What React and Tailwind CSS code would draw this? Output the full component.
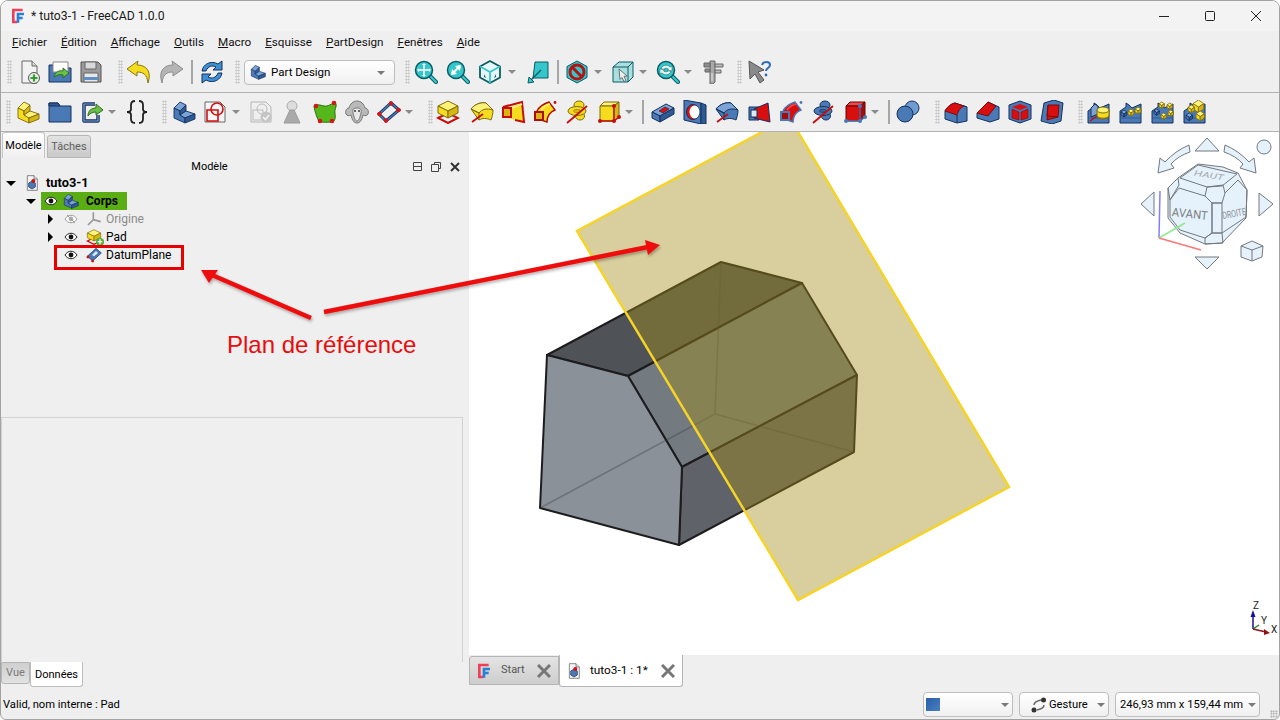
const Y = { top: "#fff27a", a: "#f6dc1e", b: "#d6b612", line: "#7d6a0c" };
const B = { top: "#7ba3d6", a: "#4a7ab5", b: "#2f5a94", line: "#15315e" };
const R = { top: "#f04a4a", a: "#d90f0f", b: "#a80a0a", line: "#6a0505" };
const T = { a: "#35c6cc", b: "#1a9aa2", line: "#0b5c62" };

const I = ({ children, className = "size-6" }) => (
  <svg viewBox="0 0 24 24" className={className}>
    {children}
  </svg>
);

// stepped block, used for part and body
const Step = ({ c, className }) => (
  <I className={className}>
    <g stroke={c.line} strokeWidth="0.9" strokeLinejoin="round">
      <path d="M2 8 8 2l6 3-6 6z" fill={c.top} />
      <path d="M2 8l6 3v4l5 3v5L2 18z" fill={c.a} />
      <path d="M8 11l6-6v6l-6 4z" fill={c.b} />
      <path d="M8 15l6-4 9 3-10 4z" fill={c.top} />
      <path d="M13 18l10-4v5l-10 4z" fill={c.b} />
    </g>
  </I>
);

const Pad = ({ className }) => (
  <I className={className}>
    <path d="M2 18l10-5 10 5-10 5z" fill="none" stroke="#c40c0c" strokeWidth="2" />
    <g stroke={Y.line} strokeLinejoin="round">
      <path d="M2 6l10-5 10 5-10 5z" fill={Y.top} />
      <path d="M2 6l10 5v7L2 13z" fill={Y.a} />
      <path d="M12 11l10-5v7l-10 5z" fill={Y.b} />
    </g>
  </I>
);

const Revolve = ({ c, line = "#c40c0c" }) => (
  <I>
    <g stroke={c.line} strokeLinejoin="round">
      <path d="M1 9C5 4 11 2 16 3l7 7c0 4-1 7-2 10-4-2-9-2-12 0z" fill={c.a} />
      <path d="M1 9C5 4 11 2 16 3l7 7C17 8 12 9 9 13z" fill={c.top} />
      <path d="M1 9l8 4v7" fill="none" />
    </g>
    <path d="M2 22 13 14" stroke={line} strokeWidth="1.800" />
  </I>
);

const Loft = ({ c, frame }) => (
  <I>
    <path d="M7 8 21 3l2 19-16-4z" fill={c.a} />
    <path d="M2 7 21 2l2 20-9-2" fill="none" stroke={frame} strokeWidth="2" />
    <path d="M9 9l12-5" stroke={c.top} strokeWidth="1.500" />
    <rect x="2" y="8" width="8" height="9" fill={c.b} stroke={frame} strokeWidth="2" />
  </I>
);

const Sweep = ({ c, frame, dot = "#c40c0c" }) => (
  <I>
    <path d="M4 11C6 7 10 4 16 2l6 8c-5 2-8 6-8 12l-9-3z" fill={c.a} stroke={frame} strokeWidth="1.400" />
    <path d="M8 10c2-3 5-5 9-6" stroke={c.top} strokeWidth="1.500" fill="none" />
    <rect x="2" y="12" width="8" height="8" fill={c.b} stroke={frame} strokeWidth="2" />
    <circle cx="22" cy="2.500" r="1.400" fill={dot} />
  </I>
);

const Helix = ({ c, line = "#c40c0c" }) => (
  <I>
    <g fill={c.a} stroke={c.line}>
      <ellipse cx="14" cy="5" rx="5" ry="4" />
      <ellipse cx="15" cy="16" rx="4.500" ry="4" />
      <ellipse cx="12" cy="11" rx="9" ry="4.500" />
    </g>
    <ellipse cx="12" cy="11" rx="3.500" ry="1.700" fill={c.b} stroke={c.line} strokeWidth=".5" />
    <path d="M2 23 22 6" stroke={line} strokeWidth="1.800" />
  </I>
);

const Prim = ({ c, dot }) => (
  <I>
    <g stroke={c.line} strokeLinejoin="round">
      <path d="M3 6l4-4h15l-5 4z" fill={c.top} />
      <path d="M3 6h14v15H3z" fill={c.a} />
      <path d="M17 6l5-4v15l-5 4z" fill={c.b} />
    </g>
    <path d="M17 6v15M3 21h14l5-4" stroke={dot} strokeWidth="1.300" fill="none" />
    <g fill={dot}>
      <circle cx="3" cy="21" r="2" />
      <circle cx="17" cy="21" r="2" />
      <circle cx="17" cy="6" r="2" />
      <circle cx="22" cy="17" r="2" />
    </g>
  </I>
);

const Mag = ({ children }) => (
  <I>
    <path d="M15.500 15.500 22 22" stroke={T.line} strokeWidth="4" strokeLinecap="round" />
    <path d="M15.500 15.500 22 22" stroke={T.a} strokeWidth="2.200" strokeLinecap="round" />
    <circle cx="10" cy="10" r="8.500" fill={T.a} stroke={T.line} strokeWidth="1.500" />
    {children}
  </I>
);

const Pattern = ({ children }) => (
  <I>
    <path d="M1 23V11l6-4V3l3 2 3 3 9-4v19z" fill={B.a} stroke={B.line} strokeLinejoin="round" />
    <path d="M1 18h21" stroke={B.b} />
    {children}
  </I>
);

const Cubie = ({ x, y, s = 1, c = Y }) => (
  <g transform={`translate(${x} ${y}) scale(${s})`} stroke={c.line} strokeWidth={0.8 / s} strokeLinejoin="round">
    <path d="M0 2l3-2 3 2-3 2z" fill={c.top} />
    <path d="M0 2l3 2v3L0 5z" fill={c.a} />
    <path d="M6 2 3 4v3l3-2z" fill={c.b} />
  </g>
);

const FcLogo = ({ className = "size-[16px]" }) => (
  <I className={className}>
    <path d="M19 3H5v18h6" fill="none" stroke="#ef4058" strokeWidth="4" />
    <path d="M10 7h11v4h-7v2h5v4h-5v5h-4z" fill="#2a7fd6" />
  </I>
);

const DocIcon = () => (
  <I className="size-[16px]">
    <path d="M5 1h10l5 5v17H5z" fill="#f4f4f4" stroke="#555" />
    <path d="M15 1v5h5" fill="#ddd" stroke="#555" />
    <path d="M7 12l5-3 5 3v6l-5 3-5-3z" fill={B.a} stroke={B.line} />
    <circle cx="14" cy="9" r="3" fill="#d40f0f" />
  </I>
);

const Eye = ({ off }) => (
  <svg viewBox="0 0 14 10" className="w-[14px] h-[10px]">
    <path d="M1 5c3-5 9-5 12 0-3 5-9 5-12 0z" fill="#fff" stroke={off ? "#9a9a9a" : "#222"} strokeWidth="1" />
    <circle cx="7" cy="5" r="2.400" fill={off ? "#b0b0b0" : "#111"} />
    {off && <path d="M3 1l8 8" stroke="#9a9a9a" strokeWidth="1" />}
  </svg>
);

const Handle = ({ className = "" }) => (
  <div className={`w-[5px] h-[24px] shrink-0 bg-[radial-gradient(#c2c2c2_0.8px,transparent_0.9px)] bg-[length:2.5px_3px] ${className}`} />
);

const Sep = ({ className = "" }) => <div className={`w-[2px] h-[24px] shrink-0 bg-[#a6a6a6] ${className}`} />;

const Btn = ({ children, className = "" }) => (
  <div className={`w-[32px] h-[32px] shrink-0 flex items-center justify-center ${className}`}>{children}</div>
);

const Drop = ({ className = "" }) => (
  <div className={`w-[12px] shrink-0 flex justify-center ${className}`}>
    <div className="w-0 h-0 border-x-[4px] border-t-[4px] border-x-transparent border-t-[#8a8a8a]" />
  </div>
);

const Combo = ({ children, className = "", arrow = "right-[3px]" }) => (
  <div className={`h-[25px] shrink-0 relative flex items-center rounded-[4px] border border-[#bdbdbd] bg-linear-to-b from-white to-[#f0f0f0] ${className}`}>
    {children}
    <div className={`absolute top-[10px] w-0 h-0 border-x-[4px] border-t-[4px] border-x-transparent border-t-[#7a7a7a] ${arrow}`} />
  </div>
);

const menus = [
  ["F", "ichier"],
  ["É", "dition"],
  ["A", "ffichage"],
  ["O", "utils"],
  ["M", "acro"],
  ["E", "squisse"],
  ["P", "artDesign"],
  ["F", "enêtres"],
  ["A", "ide"],
];

const Toolbar1 = () => (
  <div className="h-[38px] pb-[2px] flex items-center">
    <Handle className="ml-[6px]" />
    <Btn className="ml-[1px]">
      <I>
        <path d="M5 1h10l5 5v17H5z" fill="#f2f2f2" stroke="#666" />
        <path d="M15 1v5h5" fill="#d8d8d8" stroke="#666" />
        <circle cx="17" cy="18" r="5.500" fill="#eee" stroke="#555" />
        <path d="M17 14.500v7M13.500 18h7" stroke="#2e9e2e" strokeWidth="2.200" />
      </I>
    </Btn>
    <Btn className="ml-[-1px]">
      <I>
        <path d="M1 5h8l2 3h12v14H1z" fill={B.a} stroke={B.line} />
        <path d="M5 2h15v10H5z" fill="#fff" stroke="#888" />
        <path d="M6 17c1-5 5-7 9-6V8l6 5-6 5v-3c-3-1-6 0-9 2z" fill="#6cc04a" stroke="#2b6e1a" />
      </I>
    </Btn>
    <Btn className="ml-[-1px]">
      <I>
        <path d="M2 2h17l3 3v17H2z" fill="#9a9a9a" stroke="#555" />
        <path d="M6 2h11v7H6z" fill="#d9d9d9" stroke="#666" />
        <path d="M5 13h14v9H5z" fill="#e8e8e8" stroke="#666" />
        <path d="M5 17h14v3H5z" fill="#5f8fc4" />
      </I>
    </Btn>
    <Handle className="ml-[11px]" />
    <Btn>
      <I>
        <path d="M11 1 0 9l10 7v-4c6 0 10 2 11 11 4-12-2-18-11-18z" fill="#f6dc1e" stroke="#8a7410" strokeLinejoin="round" />
      </I>
    </Btn>
    <Btn>
      <I>
        <path d="M13 1l11 8-10 7v-4C8 12 4 14 3 23-1 11 5 5 14 5z" fill="#b5b5b5" stroke="#8c8c8c" strokeLinejoin="round" />
      </I>
    </Btn>
    <Sep className="ml-[4px]" />
    <Btn className="ml-[3px]">
      <I>
        <path d="M2 11C3 4 11 0 18 4l4-3v9h-9l3-3c-4-2-8-1-10 4z" fill="#3f8fd4" stroke={B.line} strokeLinejoin="round" />
        <path d="M22 13c-1 7-9 11-16 7l-4 3v-9h9l-3 3c4 2 8 1 10-4z" fill="#3f8fd4" stroke={B.line} strokeLinejoin="round" />
      </I>
    </Btn>
    <Handle className="ml-[7px]" />
    <Combo className="ml-[4px] w-[151px] pl-[5px]" arrow="right-[9px]">
      <Step c={B} className="size-[16px]" />
      <span className="ml-[5px] text-[11.5px] pt-[1px]">Part Design</span>
    </Combo>
    <Handle className="ml-[10px]" />
    <Btn>
      <Mag>
        <path d="M10 4v12M4 10h12" stroke="#fff" strokeWidth="1.500" />
        <path d="M10 3l2 2H8zM10 17l2-2H8zM3 10l2-2v4zM17 10l-2-2v4z" fill="#fff" />
      </Mag>
    </Btn>
    <Btn>
      <Mag>
        <path d="M14 6 6 14" stroke="#fff" strokeWidth="2" />
        <path d="M15 5l-1 6-5-5zM5 15l1-6 5 5z" fill="#fff" />
      </Mag>
    </Btn>
    <Btn>
      <I>
        <path d="M12 1l10 5.500v11L12 23 2 17.500v-11z" fill="#e6f6f6" stroke={T.line} strokeWidth="1.800" strokeLinejoin="round" />
        <path d="M2 6.500l10 5.500 10-5.500M12 12v11" fill="none" stroke={T.a} strokeWidth="1.800" />
        <path d="M6 14v3l2 1zM18 14v3l-2 1z" fill={T.line} />
      </I>
    </Btn>
    <Drop />
    <Btn className="ml-[4px]">
      <I>
        <path d="M9 2h13v16H7z" fill={T.a} stroke={T.line} />
        <path d="M15 10 4 21" stroke={T.line} strokeWidth="1.500" />
        <path d="M2 23l1-6 5 5z" fill={T.a} stroke={T.line} />
      </I>
    </Btn>
    <Sep className="ml-[3px]" />
    <Btn className="ml-[2px]">
      <I>
        <path d="M12 1l10 5.500v11L12 23 2 17.500v-11z" fill={T.a} stroke={T.line} />
        <circle cx="12" cy="12" r="7" fill="none" stroke="#b01414" strokeWidth="3" />
        <path d="M7 7l10 10" stroke="#b01414" strokeWidth="3" />
      </I>
    </Btn>
    <Drop className="ml-[-1px]" />
    <Btn className="ml-[3px]">
      <I>
        <path d="M2 7l6-5h14v15l-5 5H2z" fill="#a9dfe0" stroke={T.line} strokeLinejoin="round" />
        <path d="M2 7h15v15M17 7l5-5" fill="none" stroke={T.line} />
        <path d="M8 9l8 7-3 .5 2 4-2 1-2-4-2 2z" fill="#eee" stroke="#555" strokeWidth=".8" />
      </I>
    </Btn>
    <Drop className="ml-[-2px]" />
    <Btn className="ml-[3px]">
      <Mag>
        <path d="M5 9c1-4 6-5 9-2l2-1v5h-5l1.500-2c-2-1.500-4-1-5 1zM15 11c-1 4-6 5-9 2l-2 1V9h5l-1.500 2c2 1.500 4 1 5-1z" fill="#e8f8f0" stroke={T.line} strokeWidth=".5" />
      </Mag>
    </Btn>
    <Drop className="ml-[-2px]" />
    <Btn className="ml-[3px]">
      <I>
        <path d="M9 1h5v21l-2 2H9z" fill="#a8a8a8" stroke="#666" />
        <path d="M14 4h8v3h-8zM14 10h6v3h-6z" fill="#bdbdbd" stroke="#666" />
        <path d="M3 3h6v4H3zM4 9h5v3H4z" fill="#8c8c8c" stroke="#666" />
        <path d="M11 13v8" stroke="#ececec" />
      </I>
    </Btn>
    <Handle className="ml-[8px]" />
    <Btn className="ml-[2px]">
      <I>
        <path d="M1 1l15 9-6 2 6 8-4 3-5-9-5 5z" fill="#8a8a8a" stroke="#555" strokeLinejoin="round" />
        <path d="M14 5c1-4 8-4 8 0 0 3-4 3-4 6" fill="none" stroke="#2f6fb5" strokeWidth="2" />
        <circle cx="18" cy="15" r="1.400" fill="#2f6fb5" />
      </I>
    </Btn>
  </div>
);

const Toolbar2 = () => (
  <div className="h-[38px] flex items-center">
    <Handle className="ml-[5px]" />
    <Btn className="ml-[1px]">
      <Step c={Y} />
    </Btn>
    <Btn>
      <I>
        <path d="M1 3h9l2 3h11v16H1z" fill={B.a} stroke={B.line} />
        <path d="M1 6h11l-2-3H1z" fill={B.b} stroke={B.line} />
      </I>
    </Btn>
    <Btn>
      <I>
        <path d="M15 4H4v17h14v-6" fill="none" stroke={B.line} strokeWidth="3.500" strokeLinejoin="round" />
        <path d="M15 4H4v17h14v-6" fill="none" stroke={B.top} strokeWidth="1.200" strokeLinejoin="round" />
        <path d="M8 16c0-5 3-8 8-8V4l7 6-7 5v-3c-3 0-6 1-8 4z" fill="#6cc04a" stroke="#2b6e1a" strokeLinejoin="round" />
      </I>
    </Btn>
    <Drop className="ml-[-2px]" />
    <Btn className="ml-[3px]">
      <I>
        <path d="M10 1C7 1 6 3 6 5v4c0 2-1 3-4 3 3 0 4 1 4 3v4c0 2 1 4 4 4M14 1c3 0 4 2 4 4v4c0 2 1 3 4 3-3 0-4 1-4 3v4c0 2-1 4-4 4" fill="none" stroke="#222" strokeWidth="1.800" />
      </I>
    </Btn>
    <Handle className="ml-[9px]" />
    <Btn className="ml-[1px]">
      <Step c={B} />
    </Btn>
    <Btn className="ml-[-1px]">
      <I>
        <path d="M2 2h15l5 5v15H2z" fill="#f6f6f6" stroke="#666" />
        <path d="M4 10h11v11H4z" fill="none" stroke="#d40f0f" strokeWidth="1.600" />
        <circle cx="14" cy="9" r="6" fill="none" stroke="#d40f0f" strokeWidth="1.600" />
      </I>
    </Btn>
    <Drop className="ml-[-1px]" />
    <Btn className="ml-[3px]">
      <I>
        <path d="M2 2h15l5 5v15H2z" fill="#efefef" stroke="#b5b5b5" />
        <rect x="4" y="10" width="10" height="10" fill="none" stroke="#bbb" />
        <circle cx="13" cy="9" r="5" fill="none" stroke="#bbb" />
        <circle cx="17" cy="17" r="5.500" fill="#c4c4c4" />
        <path d="M14 17l2.500 2.500L20 15" fill="none" stroke="#f4f4f4" strokeWidth="1.500" />
      </I>
    </Btn>
    <Btn className="ml-[-1px]">
      <I>
        <circle cx="12" cy="6" r="5" fill="#ddd" stroke="#aaa" />
        <path d="M10 10h4l6 13H4z" fill="#aaa" stroke="#999" />
      </I>
    </Btn>
    <Btn className="ml-[1px]">
      <I>
        <path d="M1 6c5-3 9 1 13 0s8-5 9-2-2 5-1 10-1 8-3 8-11 1-13-1S1 8 1 6z" fill="#54b81c" stroke="#2e6e0a" />
        <circle cx="3" cy="6" r="2.300" fill="#d01818" />
        <circle cx="21" cy="3" r="2.300" fill="#d01818" />
        <circle cx="19" cy="21" r="2.300" fill="#d01818" />
        <circle cx="7" cy="21" r="2.300" fill="#d01818" />
      </I>
    </Btn>
    <Btn>
      <I>
        <path d="M4 8c1-4 4-7 8-7s7 3 8 7c3 0 4 4 3 6s-3 2-5 1c-1 5-3 8-6 8s-5-3-6-8c-2 1-4 1-5-1s0-6 3-6z" fill="#b9b9b9" stroke="#777" />
        <path d="M8 13c-1-4 1-5 4-5s5 1 4 5-2 8-4 8-3-4-4-8z" fill="#e8e8e8" stroke="#777" />
        <circle cx="10" cy="11" r="1.100" fill="#444" />
        <circle cx="14" cy="11" r="1.100" fill="#444" />
      </I>
    </Btn>
    <Btn>
      <I>
        <path d="M14 3l8 7L9 21l-7-7z" fill="none" stroke={B.line} strokeWidth="3" />
        <path d="M14 3l8 7L9 21l-7-7z" fill="none" stroke={B.a} strokeWidth="1.400" />
        <circle cx="14" cy="3.500" r="2.200" fill="#d01818" />
        <circle cx="21.500" cy="10" r="2.200" fill="#d01818" />
        <circle cx="9" cy="20.500" r="2.200" fill="#d01818" />
        <circle cx="2.500" cy="14" r="2.200" fill="#d01818" />
      </I>
    </Btn>
    <Drop className="ml-[-2px]" />
    <Handle className="ml-[13px]" />
    <Btn className="ml-[-1px]">
      <Pad />
    </Btn>
    <Btn className="ml-[2px]">
      <Revolve c={Y} />
    </Btn>
    <Btn className="ml-[-1px]">
      <Loft c={Y} frame="#c40c0c" />
    </Btn>
    <Btn>
      <Sweep c={Y} frame="#b00c0c" />
    </Btn>
    <Btn>
      <Helix c={Y} />
    </Btn>
    <Btn>
      <Prim c={Y} dot="#c40c0c" />
    </Btn>
    <Drop className="ml-[-2px]" />
    <Sep className="ml-[7px]" />
    <Btn className="ml-[3px]">
      <I>
        <g stroke={B.line} strokeLinejoin="round">
          <path d="M1 12 15 4l8 4-14 8z" fill={B.top} />
          <path d="M1 12l8 4v6l-8-4z" fill={B.a} />
          <path d="M9 16l14-8v6L9 22z" fill={B.b} />
        </g>
        <path d="M8 11l6-4 4 2-6 4z" fill="#d90f0f" stroke="#222" strokeWidth=".6" />
      </I>
    </Btn>
    <Btn>
      <I>
        <path d="M1 0l17 3v21L1 20z" fill={B.a} stroke={B.line} />
        <path d="M18 3l5 2v19h-5z" fill={B.b} stroke={B.line} />
        <ellipse cx="10" cy="12" rx="6.500" ry="7.500" fill="#d90f0f" stroke={B.line} />
        <ellipse cx="11.500" cy="12" rx="5" ry="6.500" fill="#fff" />
      </I>
    </Btn>
    <Btn>
      <Revolve c={B} />
    </Btn>
    <Btn>
      <I>
        <path d="M2 7h10v13H2z" fill={B.a} stroke={B.line} />
        <path d="M7 9l14-6 2 19-16-4z" fill="#d90f0f" stroke={B.line} />
        <rect x="4" y="10" width="6" height="7" fill="#dfe8f5" stroke={B.line} />
      </I>
    </Btn>
    <Btn>
      <Sweep c={R} frame={B.a} dot={B.a} />
    </Btn>
    <Btn>
      <Helix c={B} />
    </Btn>
    <Btn>
      <Prim c={R} dot={B.a} />
    </Btn>
    <Drop className="ml-[-2px]" />
    <Sep className="ml-[7px]" />
    <Btn className="ml-[2px]">
      <I>
        <circle cx="16" cy="8" r="7" fill="#6f9bd1" stroke={B.line} />
        <circle cx="9" cy="14" r="8" fill={B.a} stroke={B.line} />
      </I>
    </Btn>
    <Handle className="ml-[11px]" />
    <Btn>
      <I>
        <path d="M1 11c3-5 6-7 10-8l12 4v14l-10 2-12-4z" fill={B.a} stroke={B.line} strokeLinejoin="round" />
        <path d="M1 11c3-5 6-7 10-8l9 3c-3 1-6 5-7 9z" fill="#d90f0f" stroke="#7a0b0b" />
        <path d="M13 15v8M20 6l3 1" stroke={B.line} />
      </I>
    </Btn>
    <Btn>
      <I>
        <path d="M1 13 12 2l11 5v12l-9 3-13-4z" fill={B.a} stroke={B.line} strokeLinejoin="round" />
        <path d="M1 13 12 2l8 4-8 10z" fill="#d90f0f" stroke="#7a0b0b" />
      </I>
    </Btn>
    <Btn>
      <I>
        <path d="M12 1l11 4v14l-11 4-11-4V5z" fill={B.a} stroke={B.line} strokeLinejoin="round" />
        <path d="M4 7l8 3 8-3-8-3z" fill="#d90f0f" />
        <path d="M4 9l7 3v8l-7-2zM13 12l7-3v9l-7 2z" fill="#d90f0f" stroke="#7a0b0b" strokeWidth=".6" />
      </I>
    </Btn>
    <Btn>
      <I>
        <path d="M4 3l10-3 9 3-2 18-9 3-11-3z" fill={B.a} stroke={B.line} strokeLinejoin="round" />
        <path d="M8 5h11l-1 12-11 3z" fill="#d90f0f" stroke="#7a0b0b" />
        <path d="M8 5 7 16l11 1" fill="none" stroke="#7a0b0b" />
      </I>
    </Btn>
    <Handle className="ml-[10px]" />
    <Btn>
      <Pattern>
        <path d="M3 21 10 16" stroke="#c40c0c" strokeWidth="1.500" />
        <path d="M4 8l4-4 3 2v8l-7 3z" fill={B.top} stroke={B.line} />
        <ellipse cx="16" cy="16" rx="6" ry="3" fill={Y.b} stroke={Y.line} />
        <path d="M10 10v6c2 3 10 3 12 0v-6z" fill={Y.a} stroke={Y.line} />
        <ellipse cx="16" cy="10" rx="6" ry="3" fill={Y.top} stroke={Y.line} />
      </Pattern>
    </Btn>
    <Btn>
      <Pattern>
        <Cubie x={2} y={10} s={1} c={B} />
        <Cubie x={9} y={9} s={1} />
        <Cubie x={16} y={7} s={1} />
      </Pattern>
    </Btn>
    <Btn>
      <Pattern>
        <Cubie x={8} y={2} s={0.9} />
        <Cubie x={16} y={3} s={0.9} />
        <Cubie x={17} y={10} s={0.9} />
        <Cubie x={10} y={13} s={0.9} />
        <Cubie x={3} y={9} s={0.9} c={B} />
      </Pattern>
    </Btn>
    <Btn>
      <Pattern>
        <Cubie x={10} y={0} s={1.800} />
        <Cubie x={5} y={5} s={1.100} />
        <Cubie x={13} y={11} s={1.400} />
        <Cubie x={3} y={13} s={1.100} c={B} />
      </Pattern>
    </Btn>
  </div>
);

const Down = () => <div className="w-0 h-0 border-x-[5px] border-t-[5px] border-x-transparent border-t-black" />;
const Right = () => <div className="w-0 h-0 border-y-[5px] border-l-[5px] border-y-transparent border-l-black" />;

const Tree = () => (
  <div className="text-black">
    <div className="h-[18px] flex items-center pl-[5px]">
      <div className="w-[10px] flex justify-center">
        <Down />
      </div>
      <div className="ml-[8px]">
        <DocIcon />
      </div>
      <span className="ml-[6px] font-bold text-[12.8px]">tuto3-1</span>
    </div>
    <div className="h-[18px] flex items-center pl-[25px]">
      <div className="w-[10px] flex justify-center">
        <Down />
      </div>
      <div className="ml-[5px] w-[86px] h-[18px] bg-[#5aad12] flex items-center pl-[3px]">
        <Eye />
        <div className="ml-[5px]">
          <Step c={B} className="size-[16px]" />
        </div>
        <span className="ml-[7px] font-bold">Corps</span>
      </div>
    </div>
    <div className="h-[18px] flex items-center pl-[47px]">
      <Right />
      <div className="ml-[11px]">
        <Eye off />
      </div>
      <I className="ml-[8px] size-[16px]">
        <path d="M11 2v11L3 21M11 13l11 3" fill="none" stroke="#9a9a9a" strokeWidth="2.500" />
      </I>
      <span className="ml-[4px] text-[#8c8c8c]">Origine</span>
    </div>
    <div className="h-[18px] flex items-center pl-[47px]">
      <Right />
      <div className="ml-[11px]">
        <Eye />
      </div>
      <div className="ml-[8px] relative">
        <Pad className="size-[16px]" />
        <div className="absolute right-[-2px] bottom-[-1px] size-[8px] rounded-full bg-[#4cb03a] text-white text-[9px] leading-[8px] text-center font-bold">+</div>
      </div>
      <span className="ml-[4px]">Pad</span>
    </div>
    <div className="h-[18px] flex items-center pl-[63px]">
      <Eye />
      <I className="ml-[8px] size-[16px]">
        <path d="M2 14 15 2l8 7-13 12z" fill={B.a} stroke={B.line} />
        <path d="M9 12l6-6 3 3-6 5z" fill="#dfe8f5" />
        <circle cx="3" cy="15" r="2.200" fill="#c01818" />
        <circle cx="10" cy="21" r="2.200" fill="#c01818" />
      </I>
      <span className="ml-[4px]">DatumPlane</span>
    </div>
  </div>
);

const Viewport = () => (
  <svg viewBox="469 132 810 523" className="w-full h-full block">
    {/* solid */}
    <g stroke="#1c1c1e" strokeWidth="2" strokeLinejoin="round">
      <path d="M547 355 721 262 802 283 628 376z" fill="#4f5357" />
      <path d="M628 376 802 283 857 375 682 467z" fill="#737a80" />
      <path d="M682 467 857 375 854 452 679 545z" fill="#5f6268" />
      <path d="M547 355 628 376 682 467 679 545 540 508z" fill="#8b9199" />
    </g>
    <path d="M540 508 715 414M715 414 721 262M715 414 854 452" stroke="#3a3d40" strokeOpacity=".35" strokeWidth="1.500" fill="none" />
    {/* datum plane */}
    <path d="M577 231 762 132H798L1009 487 798 600z" fill="#a48d18" fillOpacity=".42" />
    <path d="M762 132 577 231 798 600 1009 487 798 132" fill="none" stroke="#f5d327" strokeWidth="2.500" />

    {/* nav cube */}
    <g fill="#e6f2fb" stroke="#72787e" strokeWidth="1" strokeLinejoin="round">
      <path d="M1207 138 1219 151H1195z" />
      <circle cx="1264" cy="147" r="7" />
      <path d="M1141 204 1154 192V216z" />
      <path d="M1259 193 1273 204 1259 216z" />
      <path d="M1195 257H1219L1207 269z" />
      <path d="M1189 145 1190 152Q1178 156 1171 164L1174 168 1158 173 1160 158 1165 162Q1175 151 1189 145z" />
      <path d="M1225 145 1224 152Q1236 156 1243 164L1240 168 1256 173 1254 158 1249 162Q1239 151 1225 145z" />
      <path d="M1252 241 1263 246 1262 257 1252 261 1241 257 1241 246z" />
      <path d="M1241 246 1252 250 1263 246M1252 250V261" fill="none" />
      <path d="M1168 188 1178 178 1198 164 1223 167 1238 173 1247 190 1246 218 1222 243 1205 244 1180 233 1168 218z" />
      <path d="M1180 178 1198 165 1237 174 1222 186 1207 187z" fill="none" />
      <path d="M1168 188 1178 178 1179 185 1170 200z" fill="none" />
      <path d="M1179 188 1205 196 1212 203V233L1205 238 1180 230 1170 217V200z" fill="none" />
      <path d="M1212 203H1222V233H1212z" fill="none" />
      <path d="M1207 187 1223 185 1225 193 1222 203H1212L1205 196z" fill="none" />
      <path d="M1225 193 1238 180 1247 190 1246 217 1222 233" fill="none" />
      <path d="M1205 238 1212 233H1222L1223 243 1205 244z" fill="none" />
    </g>
    <text x="1190" y="218" textAnchor="middle" textLength="36" lengthAdjust="spacingAndGlyphs" transform="rotate(6 1190 213)" className="text-[12px] fill-[#7d8288]">AVANT</text>
    <text x="1209" y="178" textAnchor="middle" textLength="30" lengthAdjust="spacingAndGlyphs" transform="rotate(9 1209 175)" className="text-[8px] italic fill-[#a5a9ad]">HAUT</text>
    <text x="1234" y="217" textAnchor="middle" textLength="24" lengthAdjust="spacingAndGlyphs" transform="rotate(-10 1234 213)" className="text-[10px] fill-[#8b9096]">DROITE</text>
    <path d="M1159 238 1160 191" stroke="#8080ff" strokeWidth="1.500" />
    <path d="M1159 238 1185 223" stroke="#8cec8c" strokeWidth="1.500" />
    <path d="M1159 238 1201 250" stroke="#ff7474" strokeWidth="1.500" />

    {/* small axis cross */}
    <path d="M1253 629V615" stroke="#14148c" strokeWidth="1.500" />
    <path d="M1253 610 1250.500 617H1255.500z" fill="#14148c" />
    <path d="M1253 629 1259 625" stroke="#1a8c1a" strokeWidth="1.500" />
    <path d="M1253 629 1266 632" stroke="#8c1414" strokeWidth="1.500" />
    <path d="M1270 633 1264 629V635z" fill="#8c1414" />
    <text x="1253" y="609" className="text-[10px] fill-[#222]">Z</text>
    <text x="1261" y="624" className="text-[10px] fill-[#222]">Y</text>
    <text x="1271" y="633" className="text-[10px] fill-[#222]">X</text>
  </svg>
);

const Annotation = () => (
  <svg viewBox="0 0 1280 720" className="absolute inset-0 w-[1280px] h-[720px] pointer-events-none">
    <defs>
      <filter id="sh" x="-10%" y="-30%" width="120%" height="160%">
        <feDropShadow dx="1" dy="2" stdDeviation="1.500" floodColor="#000" floodOpacity=".3" />
      </filter>
    </defs>
    <g filter="url(#sh)">
      <path d="M311 318 212 275" stroke="#ee0b0b" strokeWidth="4.500" />
      <path d="M201 270 218 270 209 283z" fill="#ee0b0b" />
      <path d="M324 312 648 247" stroke="#ee0b0b" strokeWidth="4.500" />
      <path d="M660 245 645 240 648 255z" fill="#ee0b0b" />
    </g>
  </svg>
);

export default function App() {
  return (
    <div className="relative w-[1280px] h-[720px] overflow-hidden bg-white font-['Roboto',sans-serif] text-[12px] text-black">
      <div className="h-full flex flex-col rounded-t-[8px] rounded-b-[6px] border border-[#a3a3a3] bg-[#efefef] overflow-hidden">
        {/* title bar */}
        <div className="h-[30px] shrink-0 flex items-center bg-[#f3f3f3]">
          <div className="ml-[9px]">
            <FcLogo />
          </div>
          <span className="ml-[5px] text-[#1a1a1a] text-[12.2px]">* tuto3-1 - FreeCAD 1.0.0</span>
          <div className="ml-auto flex items-center text-[#222]">
            <div className="w-[46px] flex justify-center">
              <div className="w-[10px] h-[1px] bg-[#222]" />
            </div>
            <div className="w-[46px] flex justify-center">
              <div className="size-[10px] rounded-[1.500px] border border-[#222]" />
            </div>
            <div className="w-[46px] flex justify-center">
              <svg viewBox="0 0 10 10" className="size-[10px]">
                <path d="M0 0 10 10M10 0 0 10" stroke="#222" strokeWidth="1" />
              </svg>
            </div>
          </div>
        </div>
        {/* menu */}
        <div className="h-[23px] shrink-0 flex items-center pl-[4px]">
          {menus.map(([a, b], i) => (
            <div key={i} className="px-[7px] text-[#111] text-[11.7px]">
              <span className="underline">{a}</span>
              {b}
            </div>
          ))}
        </div>
        <Toolbar1 />
        <div className="h-[1px] shrink-0 bg-[#b3b3b3]" />
        <Toolbar2 />
        <div className="h-[1px] shrink-0 bg-[#b3b3b3]" />
        {/* body */}
        <div className="flex-1 min-h-0 flex">
          <div className="w-[468px] shrink-0 flex flex-col">
            <div className="h-[26px] shrink-0 flex items-end pl-[1px]">
              <div className="w-[43px] h-[26px] pt-[2px] flex items-center justify-center rounded-t-[3px] border-x border-t border-[#c4c4c4] bg-linear-to-b from-white to-[#efefef] text-[11px]">Modèle</div>
              <div className="ml-[2px] w-[44px] h-[23px] pt-[2px] flex items-center justify-center rounded-t-[3px] border border-[#b5b5b5] bg-linear-to-b from-[#e2e2e2] to-[#c9c9c9] text-[#5f5f5f] text-[11px]">Tâches</div>
            </div>
            <div className="h-[16px] pt-[2px] shrink-0 flex items-center">
              <div className="w-[417px] text-center text-[11px]">Modèle</div>
              <div className="ml-[-5px] flex items-center">
                <svg viewBox="0 0 10 10" className="size-[10px]">
                  <path d="M.5.5h8v8h-8zM.5 4.500h8" fill="none" stroke="#444" />
                </svg>
                <svg viewBox="0 0 10 10" className="ml-[8px] size-[10px]">
                  <path d="M3.500 2.500v-2h6v6h-2M.5 2.500h7v7h-7z" fill="none" stroke="#444" />
                </svg>
                <svg viewBox="0 0 10 10" className="ml-[9px] size-[10px]">
                  <path d="M1 1l8 8M9 1 1 9" stroke="#333" strokeWidth="2" />
                </svg>
              </div>
            </div>
            <Tree />
            <div className="flex-1" />
            <div className="h-[245px] shrink-0 w-[462px] border-x border-t border-[#d2d2d2]" />
            <div className="h-[28px] shrink-0 flex items-start">
              <div className="w-[29px] h-[22px] flex items-center justify-center rounded-b-[3px] border border-[#b5b5b5] bg-linear-to-b from-[#cfcfcf] to-[#e2e2e2] text-[#7a7a7a] text-[11px]">Vue</div>
              <div className="w-[53px] h-[25px] pt-[2px] flex items-center justify-center rounded-b-[3px] border-x border-b border-[#bdbdbd] bg-white text-[11px]">Données</div>
            </div>
          </div>
          <div className="flex-1 min-w-0 flex flex-col">
            <div className="h-[523px] shrink-0 bg-white">
              <Viewport />
            </div>
            <div className="flex-1 flex items-start">
              <div className="w-[90px] h-[29px] mt-[1px] flex items-center rounded-tl-[3px] border border-[#b5b5b5] bg-linear-to-b from-[#e4e4e4] to-[#cdcdcd] pl-[6px]">
                <FcLogo />
                <span className="ml-[9px] text-[#555] text-[11px]">Start</span>
                <svg viewBox="0 0 14 14" className="ml-auto mr-[7px] size-[14px]">
                  <path d="M1 1l12 12M13 1 1 13" stroke="#777" strokeWidth="3" />
                </svg>
              </div>
              <div className="w-[124px] h-[32px] flex items-center rounded-b-[3px] border-x border-b border-[#b5b5b5] bg-white pl-[6px]">
                <DocIcon />
                <span className="ml-[8px] text-[11.8px]">tuto3-1 : 1*</span>
                <svg viewBox="0 0 14 14" className="ml-auto mr-[7px] size-[14px]">
                  <path d="M1 1l12 12M13 1 1 13" stroke="#777" strokeWidth="3" />
                </svg>
              </div>
            </div>
          </div>
        </div>
        {/* status bar */}
        <div className="h-[29px] shrink-0 flex items-center pl-[2px] relative text-[11.2px]">
          <span className="pt-[2px]">Valid, nom interne : Pad</span>
          <Combo className="ml-auto w-[90px] pl-[2px]">
            <div className="w-[14px] h-[13px] bg-linear-to-br from-[#2a5ea8] to-[#4a7fc0]" />
          </Combo>
          <Combo className="ml-[6px] w-[90px] pl-[11px]">
            <svg viewBox="0 0 16 16" className="size-[16px]">
              <circle cx="12.500" cy="3" r="2.500" fill="#333" />
              <circle cx="3" cy="13" r="2.500" fill="#333" />
              <path d="M10 3C5 4 3 6 3 8M6 13c5-1 7-3 7-5" fill="none" stroke="#666" strokeWidth="1.500" />
            </svg>
            <span className="ml-[2px] pt-[2px]">Gesture</span>
          </Combo>
          <Combo className="ml-[6px] mr-[19px] w-[145px] pl-[4px]">
            <span className="pt-[2px]">246,93 mm x 159,44 mm</span>
          </Combo>
          <div className="absolute right-[1px] bottom-[1px] w-[8px] h-[8px] bg-[radial-gradient(#a8a8a8_0.8px,transparent_0.9px)] bg-[length:2.5px_2.5px]" />
        </div>
      </div>
      {/* callouts drawn over the screenshot */}
      <div className="absolute left-[54px] top-[245px] w-[130px] h-[25px] border-[3px] border-[#e60000]" />
      <Annotation />
      <div className="absolute left-[227px] top-[331px] font-['Liberation_Sans',sans-serif] text-[24px] leading-[28px] text-[#e60d0d]">Plan de référence</div>
    </div>
  );
}
